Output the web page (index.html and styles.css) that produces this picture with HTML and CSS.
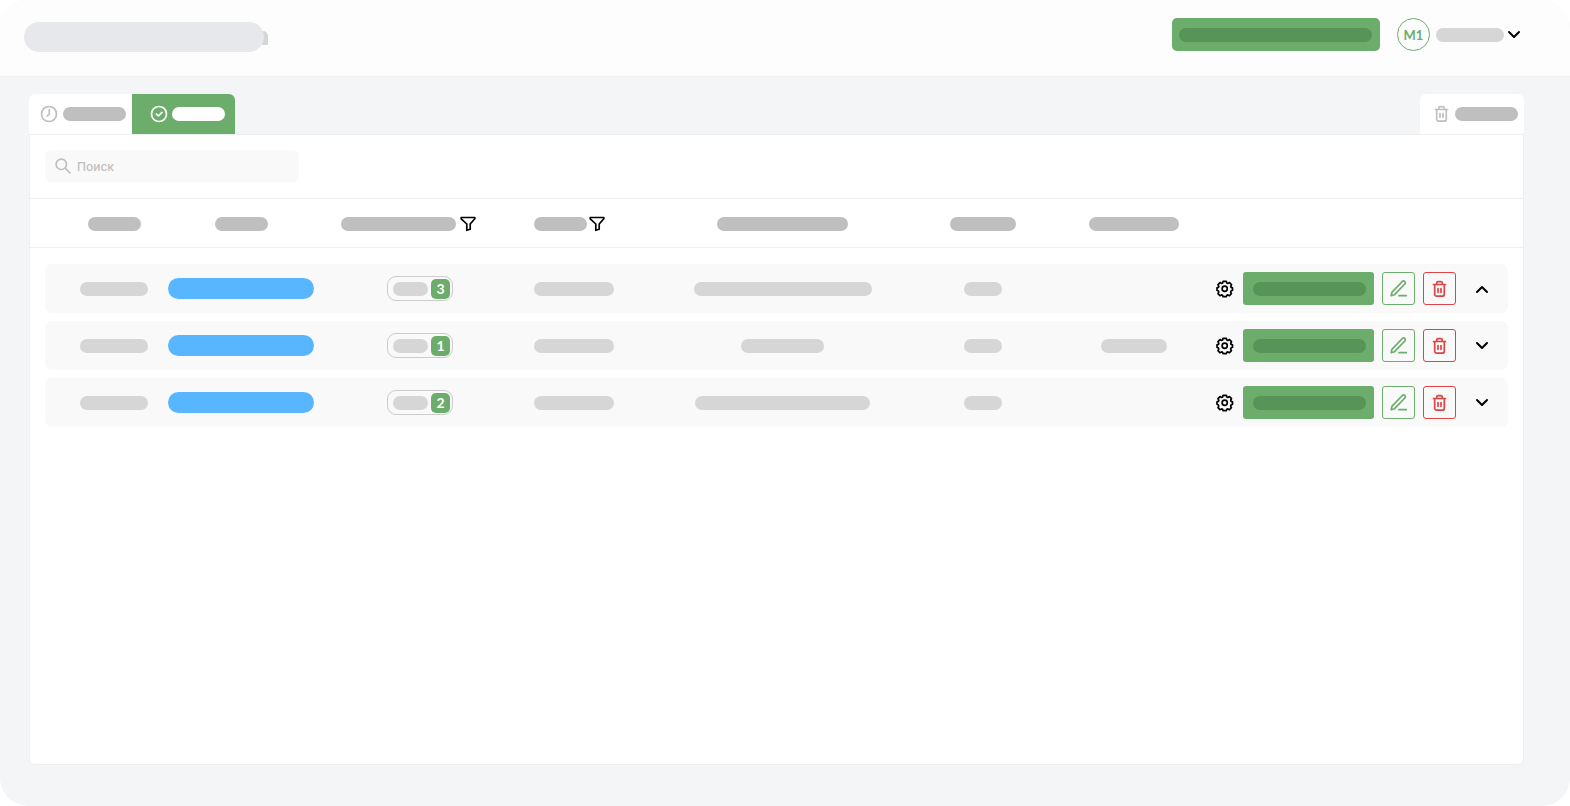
FILE: index.html
```html
<!DOCTYPE html>
<html lang="ru">
<head>
<meta charset="utf-8">
<title>Поиск</title>
<link rel="stylesheet" href="styles.css">
</head>
<body>
<svg class="sprite" aria-hidden="true">
  <symbol id="chevron" viewBox="0 0 14 14"><path d="M2 4l5 5 5-5"/></symbol>
  <symbol id="trash" viewBox="0 0 16 18"><path d="M1.500 4.500h12M2.700 4.500v9.700a2 2 0 0 0 2 2h5.600a2 2 0 0 0 2-2V4.500M4.700 4.300V3.200a1.500 1.500 0 0 1 1.500-1.500h2.600a1.500 1.500 0 0 1 1.500 1.500v1.100M6 8.500v3.800M9 8.500v3.800"/></symbol>
  <symbol id="pen" viewBox="0 0 18 18"><path d="M1.200 15.700l.7-3.400L12.300 1.500a1.700 1.700 0 0 1 2.500 0 1.700 1.700 0 0 1 0 2.500L4.600 14.700zM9 15.700h7.300"/></symbol>
  <symbol id="funnel" viewBox="0 0 16 16"><path d="M1.200 1.500h13.600v1.300L10.200 8v5.300l-3.400 1V8L1.200 2.800z"/></symbol>
  <symbol id="gear" viewBox="0 0 18 18"><circle cx="8.700" cy="8.700" r="2.600"/><path d="M7.100 1.300h3.200l.5 1.700 1 .4 1.700-.8 2 2.100-.8 1.700.4 1 1.400.5v2.400l-1.500.7-.4 1 .8 1.700-1.900 2-1.700-.8-1 .4-.5 1.300H7.100l-.5-1.300-1-.4-1.700.8-1.900-2 .8-1.700-.4-1-1.400-.7V7.900l1.400-.5.4-1-.8-1.700 2-2.100 1.600.8 1-.4z"/></symbol>
</svg>
<div class="app">
  <header class="topbar">
    <span class="logo"></span>
    <div class="account">
      <button class="btn create" aria-label="Создать"><span class="bar shade"></span></button>
      <span class="avatar">M1</span>
      <button class="user" aria-label="Профиль"><span class="bar w68"></span><svg class="ic14"><use href="#chevron"/></svg></button>
    </div>
  </header>
  <main>
    <nav class="tabs">
      <button class="tab first" aria-label="В работе"><svg class="ic18" viewBox="0 0 18 18"><circle cx="9" cy="9" r="7.500"/><path d="M9.300 4.500v4.300L7.200 11"/></svg><span class="bar dark w63"></span></button>
      <button class="tab active" aria-label="Готово"><svg class="ic18" viewBox="0 0 18 18"><circle cx="9" cy="9" r="7.500"/><path d="M6.300 9l2 2 3.700-3.700"/></svg><span class="bar white w53"></span></button>
      <button class="tab bin" aria-label="Корзина"><svg class="trash"><use href="#trash"/></svg><span class="bar dark w63"></span></button>
    </nav>
    <section class="panel">
      <div class="tools">
        <label class="search"><svg class="lens" viewBox="0 0 16 16"><circle cx="6.300" cy="6.300" r="5.200"/><path d="M10.200 10.200l4.800 4.800"/></svg><input type="search" placeholder="Поиск" aria-label="Поиск"></label>
      </div>
      <table class="grid">
        <thead>
          <tr>
            <th class="c1"><span class="bar dark w53"></span></th>
            <th><span class="bar dark w53"></span></th>
            <th><span class="bar dark w115"></span><svg class="funnel"><use href="#funnel"/></svg></th>
            <th class="c4"><span class="bar dark w53"></span><svg class="funnel near"><use href="#funnel"/></svg></th>
            <th><span class="bar dark w131"></span></th>
            <th><span class="bar dark w66"></span></th>
            <th><span class="bar dark w90"></span></th>
            <th></th>
          </tr>
        </thead>
        <tbody>
          <tr>
            <td class="c1"><span class="bar w68"></span></td>
            <td><span class="status"></span></td>
            <td class="c3"><span class="chip"><span class="bar w35"></span><b>3</b></span></td>
            <td class="c4"><span class="bar w80"></span></td>
            <td><span class="bar w178"></span></td>
            <td><span class="bar w38"></span></td>
            <td></td>
            <td class="actions">
              <button class="plain gear" aria-label="Настройки"><svg class="ic18"><use href="#gear"/></svg></button>
              <button class="btn go" aria-label="Открыть"><span class="bar shade"></span></button>
              <button class="box edit" aria-label="Изменить"><svg class="ic18"><use href="#pen"/></svg></button>
              <button class="box del" aria-label="Удалить"><svg class="trash"><use href="#trash"/></svg></button>
              <button class="plain toggle open" aria-label="Свернуть"><svg class="ic14"><use href="#chevron"/></svg></button>
            </td>
          </tr>
          <tr>
            <td class="c1"><span class="bar w68"></span></td>
            <td><span class="status"></span></td>
            <td class="c3"><span class="chip"><span class="bar w35"></span><b>1</b></span></td>
            <td class="c4"><span class="bar w80"></span></td>
            <td><span class="bar w83"></span></td>
            <td><span class="bar w38"></span></td>
            <td><span class="bar w66"></span></td>
            <td class="actions">
              <button class="plain gear" aria-label="Настройки"><svg class="ic18"><use href="#gear"/></svg></button>
              <button class="btn go" aria-label="Открыть"><span class="bar shade"></span></button>
              <button class="box edit" aria-label="Изменить"><svg class="ic18"><use href="#pen"/></svg></button>
              <button class="box del" aria-label="Удалить"><svg class="trash"><use href="#trash"/></svg></button>
              <button class="plain toggle" aria-label="Развернуть"><svg class="ic14"><use href="#chevron"/></svg></button>
            </td>
          </tr>
          <tr>
            <td class="c1"><span class="bar w68"></span></td>
            <td><span class="status"></span></td>
            <td class="c3"><span class="chip"><span class="bar w35"></span><b>2</b></span></td>
            <td class="c4"><span class="bar w80"></span></td>
            <td><span class="bar w175"></span></td>
            <td><span class="bar w38"></span></td>
            <td></td>
            <td class="actions">
              <button class="plain gear" aria-label="Настройки"><svg class="ic18"><use href="#gear"/></svg></button>
              <button class="btn go" aria-label="Открыть"><span class="bar shade"></span></button>
              <button class="box edit" aria-label="Изменить"><svg class="ic18"><use href="#pen"/></svg></button>
              <button class="box del" aria-label="Удалить"><svg class="trash"><use href="#trash"/></svg></button>
              <button class="plain toggle" aria-label="Развернуть"><svg class="ic14"><use href="#chevron"/></svg></button>
            </td>
          </tr>
        </tbody>
      </table>
    </section>
  </main>
</div>
</body>
</html>
```
FILE: styles.css
```css
* { box-sizing: border-box; }
body { margin: 0; background: #fff; font-family: Lato, "Noto Sans", sans-serif; }
button { padding: 0; border: 0; background: none; font: inherit; color: inherit; }
svg { display: block; flex: none; fill: none; stroke: currentColor; stroke-width: 1.7; stroke-linecap: round; stroke-linejoin: round; }
.sprite { position: absolute; width: 0; height: 0; }
.ic18 { width: 18px; height: 18px; }
.ic14 { width: 14px; height: 14px; stroke-width: 2; }
.trash { width: 16px; height: 18px; }
.lens { width: 16px; height: 16px; }

.app { display: flex; flex-direction: column; min-height: 100vh; background: #f4f5f7; border-radius: 28px; overflow: hidden; }
.topbar { display: flex; justify-content: space-between; align-items: flex-start; height: 77px; padding: 18px 49px 0 24px; background: #fdfdfd; border-bottom: 1px solid #eeeff0; }
.logo { position: relative; z-index: 0; width: 240px; height: 30px; margin-top: 4px; }
.logo::before { content: ""; position: absolute; inset: 0; border-radius: 15px; background: #e7e8ec; }
.logo::after { content: ""; position: absolute; z-index: -1; right: -4px; top: 9px; width: 6px; height: 14px; border-radius: 0 5px 0 0; background: #d6d6d6; }
.account { display: flex; align-items: center; }
.user { display: flex; align-items: center; gap: 3px; margin-left: 6px; color: #000; }

.bar { display: block; flex: none; height: 14px; border-radius: 7px; background: #d6d6d6; }
.dark { background: #bfbfbf; }
.white { background: #fff; }
.shade { background: #579457; }
.w35 { width: 35px; }
.w38 { width: 38px; }
.w53 { width: 53px; }
.w63 { width: 63px; }
.w66 { width: 66px; }
.w68 { width: 68px; }
.w80 { width: 80px; }
.w83 { width: 83px; }
.w90 { width: 90px; }
.w115 { width: 115px; }
.w131 { width: 131px; }
.w175 { width: 175px; }
.w178 { width: 178px; }

.btn { display: flex; align-items: center; height: 33px; background: #6cad6c; }
.btn .bar { flex: 1; }
.create { width: 208px; padding: 0 8px 0 7px; border-radius: 5px; }
.go { width: 131px; padding: 0 8px 0 10px; border-radius: 3px; margin: 0 8px 0 9px; }
.avatar { display: flex; align-items: center; justify-content: center; width: 33px; height: 33px; margin-left: 17px; border: 1px solid #6cad6c; border-radius: 50%; color: #6cad6c; font-size: 13px; font-weight: 700; }

main { display: flex; flex-direction: column; flex: 1; padding: 17px 46px 41px 29px; }
.tabs { display: flex; align-items: flex-end; }
.tab { display: flex; align-items: center; justify-content: flex-end; gap: 5px; width: 103px; height: 40px; padding-right: 6px; background: #fff; color: #bfbfbf; }
.first { border-radius: 6px 0 0 0; }
.active { gap: 4px; padding-right: 10px; border-radius: 0 6px 0 0; background: #6cad6c; color: #fff; }
.bin { width: 104px; margin-left: auto; border-radius: 6px 6px 0 0; }

.panel { flex: 1; background: #fff; border: 1px solid #eeeff1; border-radius: 0 0 6px 6px; }
.tools { padding: 15px 15px 16px; }
.search { display: flex; align-items: center; gap: 6px; width: 254px; height: 32px; padding: 0 10px; border-radius: 6px; background: #f9f9f9; color: #bfbfbf; }
.search input { flex: 1; min-width: 0; padding: 0; border: 0; outline: 0; background: none; font: 500 12px Inter, "Noto Sans", sans-serif; }
.search input::placeholder { color: #bfbfbf; }

.grid, .grid thead, .grid tbody { display: block; }
.grid tr { display: grid; grid-template-columns: 107fr 178fr 156fr 166fr 261fr 140fr 161fr 294px; align-items: center; }
.grid thead tr { height: 50px; padding: 2px 15px 0; border: 1px solid #eeeff0; border-width: 1px 0; }
.grid th, .grid td { display: flex; align-items: center; justify-content: center; padding: 0; }
.grid tbody { display: flex; flex-direction: column; gap: 8px; padding: 16px 15px; }
.grid tbody tr { height: 49px; border-radius: 7px; background: #f9f9f9; }
.grid .c1 { padding-left: 31px; }
.grid .c3 { padding-left: 24px; }
.grid .c4 { justify-content: flex-start; padding-left: 48px; }
.funnel { width: 16px; height: 16px; margin-left: 4px; color: #000; }
.near { margin-left: 2px; }
.status { width: 146px; height: 21px; border-radius: 11px; background: #57b6ff; }
.chip { display: flex; align-items: center; justify-content: space-between; width: 66px; height: 25px; padding: 0 2px 0 5px; border: 1px solid #ccc; border-radius: 9px; }
.chip b { width: 19px; height: 20px; border-radius: 5px; background: #6cad6c; color: #fff; font-size: 14px; line-height: 20px; text-align: center; }
.grid .actions { justify-content: flex-end; padding-right: 14px; }
.box { display: flex; align-items: center; justify-content: center; width: 33px; height: 33px; border: 1px solid; border-radius: 3px; }
.edit { color: #6cad6c; }
.del { margin-left: 8px; color: #e04343; }
.plain { color: #000; }
.toggle { display: flex; justify-content: center; width: 24px; margin-left: 14px; }
.open svg { transform: rotate(180deg); }
```
